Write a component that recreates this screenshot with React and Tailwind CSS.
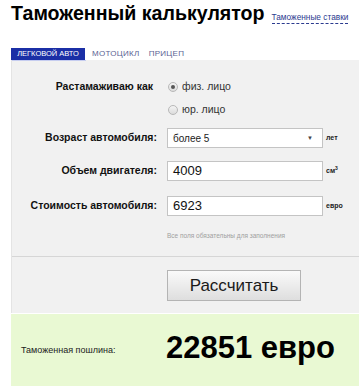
import React from "react";

function Radio({ checked, label }) {
    return (
        <div className="flex items-center h-[23px]">
            <span className="w-[10px] h-[10px] rounded-full border border-[#b8b8b8] bg-gradient-to-b from-[#f4f4f4] to-[#dcdcdc] flex items-center justify-center mr-[4px]">
                {checked && <span className="w-[4px] h-[4px] rounded-full bg-[#555]" />}
            </span>
            <span className="text-[10.5px] text-[#333]">{label}</span>
        </div>
    );
}

function Row({ label, children, unit, mt }) {
    return (
        <div className={"flex items-center h-[20px] " + mt}>
            <div className="w-[146px] text-right text-[10.5px] font-bold text-[#111] pr-[1px] whitespace-nowrap">{label}</div>
            <div className="ml-[9px] w-[156px] h-[20px]">{children}</div>
            <div className="ml-[3px] text-[7px] font-bold text-[#222]">{unit}</div>
        </div>
    );
}

export default function App() {
    return (
        <div className="w-[359px] h-[386px] overflow-hidden bg-white" style={{ fontFamily: '"Liberation Sans", Arial, sans-serif' }}>
            <div className="flex items-baseline pl-[11px] pt-[1px] h-[48px] whitespace-nowrap">
                <h1 className="text-[19.6px] font-bold leading-[24px] text-black">Таможенный калькулятор</h1>
                <a href="#" className="ml-[7px] text-[8.3px] text-[#2b3b8f] border-b border-dashed border-[#2b3b8f] leading-[11px]">Таможенные ставки</a>
            </div>

            <div className="flex items-end h-[12px] pl-[11px] text-[7.5px] uppercase whitespace-nowrap">
                <div className="w-[74px] h-[12px] bg-[#1b2fa6] text-white flex items-center justify-center">Легковой авто</div>
                <div className="ml-[7px] text-[8px] text-[#5b5f94] leading-[12px] tracking-[0.3px]">Мотоцикл</div>
                <div className="ml-[9px] text-[8px] text-[#5b5f94] leading-[12px] tracking-[0.3px]">Прицеп</div>
            </div>

            <div className="ml-[11px] bg-[#f1f1f1] border-l border-[#e4e4e4]">
                <div className="h-[1px] w-[74px] bg-[#c6cdf0]" />
                <div className="pt-[14px]">
                    <div className="flex">
                        <div className="w-[146px] text-right text-[10.5px] font-bold text-[#111] pr-[5px] h-[23px] flex items-center justify-end">Растамаживаю как</div>
                        <div className="ml-[10px]">
                            <Radio checked label="физ. лицо" />
                            <Radio label="юр. лицо" />
                        </div>
                    </div>

                    <Row label="Возраст автомобиля:" unit="лет" mt="mt-[7px]">
                        <div className="w-full h-full bg-white border border-[#c4c4c4] flex items-center justify-between px-[5px]">
                            <span className="text-[10px] text-[#222]">более 5</span>
                            <span className="text-[6px] text-[#444] mr-[4px]">▼</span>
                        </div>
                    </Row>

                    <Row label="Объем двигателя:" unit={<span>см<sup className="text-[5px]">3</sup></span>} mt="mt-[13px]">
                        <div className="w-full h-full bg-white border border-[#c4c4c4] flex items-center px-[5px] text-[13px] text-[#111]">4009</div>
                    </Row>

                    <Row label="Стоимость автомобиля:" unit="евро" mt="mt-[15px]">
                        <div className="w-full h-full bg-white border border-[#c4c4c4] flex items-center px-[5px] text-[13px] text-[#111]">6923</div>
                    </Row>

                    <div className="h-[40px] flex items-center pl-[155px] text-[6.5px] text-[#a0a0a0]">Все поля обязательны для заполнения</div>
                </div>

                <div className="h-[1px] bg-[#d6d6d6]" />

                <div className="pt-[13px] pb-[12px] pl-[155px]">
                    <button className="w-[134px] h-[31px] border border-[#b4b4b4] bg-gradient-to-b from-[#fafafa] to-[#dedede] text-[17px] text-[#1a1a1a]">Рассчитать</button>
                </div>
            </div>

            <div className="ml-[11px] mt-[1px] h-[80px] bg-[#e9f9d3] flex items-center pt-[1px] whitespace-nowrap">
                <div className="w-[155px] pl-[10px] text-[9px] text-[#222] mb-[8px]">Таможенная пошлина:</div>
                <div className="text-[31px] font-bold text-black leading-none mb-[14px]">22851 евро</div>
            </div>
        </div>
    );
}
